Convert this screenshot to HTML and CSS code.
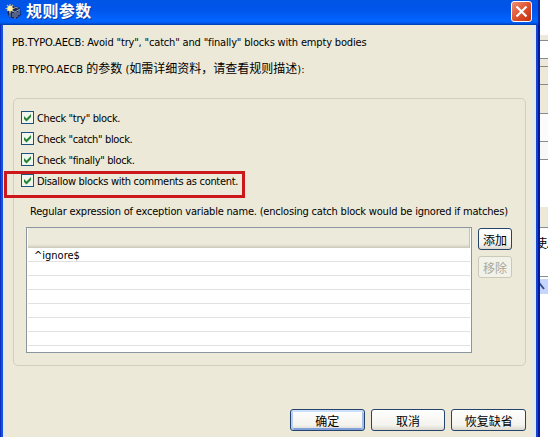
FILE: index.html
```html
<!DOCTYPE html>
<html lang="zh-CN">
<head>
<meta charset="utf-8">
<title>规则参数</title>
<link rel="stylesheet" href="styles.css">
</head>
<body>
<div class="screen">
  <section class="dialog">
    <header class="titlebar">
      <svg class="app-icon" width="17" height="17" viewBox="0 0 17 17">
        <path d="M2 8l2-3 6-2 5 2 1 7-5 4-7-2z" fill="#1c2850"/>
        <path d="M4 7l6 2 5-3M10 9v7M5 9v5M8 10v4M12 9v5M14 7v5M9 4l4 1" stroke="#8c9cc4" fill="none"/>
        <path d="M5 1v9M.5 5.500h9M2 2l6 6M8 2l-6 6" stroke="#c6b689" stroke-width="1.200"/>
        <circle cx="5" cy="5.500" r="2.700" fill="#fff0a4"/>
      </svg>
      <h1>规则参数</h1>
      <button class="close" aria-label="Close"><svg width="21" height="21" viewBox="0 0 21 21"><path d="M5.500 5.500l10 10M15.500 5.500l-10 10" stroke="#fff" stroke-width="2.200"/></svg></button>
    </header>
    <main class="content">
      <p class="intro t1">PB.TYPO.AECB: Avoid "try", "catch" and "finally" blocks with empty bodies</p>
      <p class="details"><span class="t2">PB.TYPO.AECB</span> <span class="cn">的参数</span> (<span class="cn">如需详细资料，请查看规则描述</span>):</p>
      <div class="group">
        <div class="checks">
          <label><i class="box"><svg viewBox="0 0 11 11"><path d="M2 4v3l2.500 2.500L9 5V2L4.500 6.500z"/></svg></i><span class="c1">Check "try" block.</span></label>
          <label><i class="box"><svg viewBox="0 0 11 11"><path d="M2 4v3l2.500 2.500L9 5V2L4.500 6.500z"/></svg></i><span class="c2">Check "catch" block.</span></label>
          <label><i class="box"><svg viewBox="0 0 11 11"><path d="M2 4v3l2.500 2.500L9 5V2L4.500 6.500z"/></svg></i><span class="c3">Check "finally" block.</span></label>
          <label class="marked"><i class="box"><svg viewBox="0 0 11 11"><path d="M2 4v3l2.500 2.500L9 5V2L4.500 6.500z"/></svg></i><span class="c4">Disallow blocks with comments as content.</span></label>
        </div>
        <p class="regex t3">Regular expression of exception variable name. (enclosing catch block would be ignored if matches)</p>
        <div class="editor">
          <div class="table">
            <div class="head"></div>
            <div class="row">^ignore$</div><div class="row"></div><div class="row"></div><div class="row"></div>
            <div class="row"></div><div class="row"></div><div class="row"></div>
          </div>
          <div class="side"><button class="btn">添加</button><button class="btn disabled">移除</button></div>
        </div>
      </div>
      <footer class="actions"><button class="btn default">确定</button><button class="btn">取消</button><button class="btn">恢复缺省</button></footer>
    </main>
  </section>
  <aside class="behind">
    <div class="b1"></div><div class="b2"></div><div class="b3"></div><div class="b4"></div><div class="b5"></div>
    <div class="b6"></div><div class="b7"></div><div class="b8"></div><div class="b9"></div>
    <div class="b10"><span>使.</span></div>
    <div class="scroll"><svg width="8" height="14" viewBox="0 0 8 14"><path d="M-3 8l3-3 4 5" fill="none" stroke="#35508d" stroke-width="2"/></svg></div>
  </aside>
</div>
</body>
</html>
```
FILE: styles.css
```css
*, *::after { box-sizing: border-box; }
body { margin: 0; overflow: hidden; color: #000; font: 11px/14px "DejaVu Sans Condensed", "Noto Sans CJK SC", sans-serif; }
p, h1 { margin: 0; white-space: nowrap; }
.screen { display: flex; width: 548px; height: 437px; overflow: hidden; }
.dialog { width: 540px; height: 437px; display: flex; flex-direction: column; background: linear-gradient(90deg, #0830c0 0 1px, #1551dc 1px 3px, transparent 3px 536px, #1445d2 536px 538px, #0018a0 538px); }
.titlebar { height: 25px; display: flex; align-items: flex-start; padding: 1px 6px 0 5px; background: linear-gradient(#0054e5, #0055eb 40%, #0064ff 82%, #005df5 90%, #003cae); border-right: 2px solid #0726ab; }
.app-icon { margin-top: 2px; }
h1 { margin: 0 0 0 4px; color: #fff; font: bold 16px/19px "Noto Sans CJK SC", sans-serif; letter-spacing: .4px; text-shadow: 1px 1px #0939a2; flex: 1; }
.close { width: 21px; height: 21px; padding: 0; border: 1px solid #fff; border-radius: 3px; background: linear-gradient(135deg, #ec9078, #e0512e 50%, #be3010); display: flex; align-items: center; justify-content: center; }
.close svg { flex: none; }
.content { margin: 0 4px 0 3px; flex: 1; background: #ece9d8; border-right: 4px solid #e3e8e8; border-left: 2px solid #e2eaed; padding: 11px 6px 0 7px; }
.intro, .details { height: 26px; line-height: 14px; }
.cn { font-size: 12px; letter-spacing: 0; }
.t1 { letter-spacing: -.165px; }
.details { letter-spacing: 0; }
.c1 { letter-spacing: -.33px; }
.c2, .c3 { letter-spacing: -.35px; }
.c4 { letter-spacing: -.31px; }
.t3 { letter-spacing: -.2px; }
.group { width: 513px; height: 268px; margin: 10px 0 0 1px; border: 1px solid #d0d0bf; border-radius: 5px; padding: 12px 12px 0 7px; }
.checks { display: flex; flex-direction: column; gap: 7px; }
label { display: flex; align-items: flex-start; height: 14px; white-space: nowrap; }
label span { padding-top: 1px; }
.box { width: 13px; height: 13px; border: 1px solid #1c5180; background: #f0f5ee; margin-right: 3px; display: block; flex: none; }
.box svg { display: block; fill: #278435; }
.marked { position: relative; }
.marked::after { content: ""; position: absolute; left: -17px; top: -3px; width: 241px; height: 27px; border: 3px solid #cc171b; }
.regex { margin: 17px 0 0 9px; }
.editor { display: flex; gap: 6px; margin: 8px 0 0 5px; }
.table { width: 446px; height: 126px; overflow: hidden; border: 1px solid #8b96a0; background: #fff; padding: 0 1px; }
.head { height: 20px; background: linear-gradient(#ebeadb 16px, #dedccd 18px, #cbc7b8); border-right: 1px solid #c7c5b2; }
.row { height: 14px; line-height: 15px; padding-left: 6px; border-bottom: 1px solid #e1e1e1; }
.side { padding-top: 1px; display: flex; flex-direction: column; gap: 6px; }
.btn { width: 75px; height: 22px; padding: 0; border: 1px solid #24446c; border-radius: 3px; color: #000; background: linear-gradient(#fff, #f4f3ee 75%, #dcd8ce); font: 12px/19px "Noto Sans CJK SC", sans-serif; white-space: nowrap; }
.side .btn { width: 34px; }
.btn.disabled { color: #aaa899; border-color: #cbc8b9; background: #f3f2e9; }
.btn.default { box-shadow: inset 0 2px #cce0fc, inset 2px 0 #b5cef2, inset -2px 0 #a5bee8, inset 0 -2px #819fd8; }
.actions { display: flex; gap: 6px; margin: 43px 0 0 278px; }
.behind { width: 8px; background: #fff; display: flex; flex-direction: column; }
.behind div { border-bottom: 1px solid #878d8d; flex: none; }
.behind .b1 { height: 35px; border: 0; }
.b2 { height: 6px; background: #ece9d8; }
.b3 { height: 18px; }
.b4 { height: 8px; background: #ece9d8; }
.b5 { height: 18px; background: #ece9d8; }
.b6 { height: 29px; background: #ece9d8; }
.b7 { height: 28px; background: #fbfbfb; }
.b8 { height: 18px; background: #f8f8f8; }
.b9 { height: 68px; background: linear-gradient(#fff 47px, #ece9d8 47px); }
.b10 { height: 49px; overflow: hidden; padding-top: 9px; font-size: 12px; }
.b10 span { margin-left: -5px; white-space: nowrap; letter-spacing: -1px; }
.behind .scroll { height: 15px; margin-top: 2px; background: #c6d5fd; border: 0; }
.scroll svg { display: block; }
```
